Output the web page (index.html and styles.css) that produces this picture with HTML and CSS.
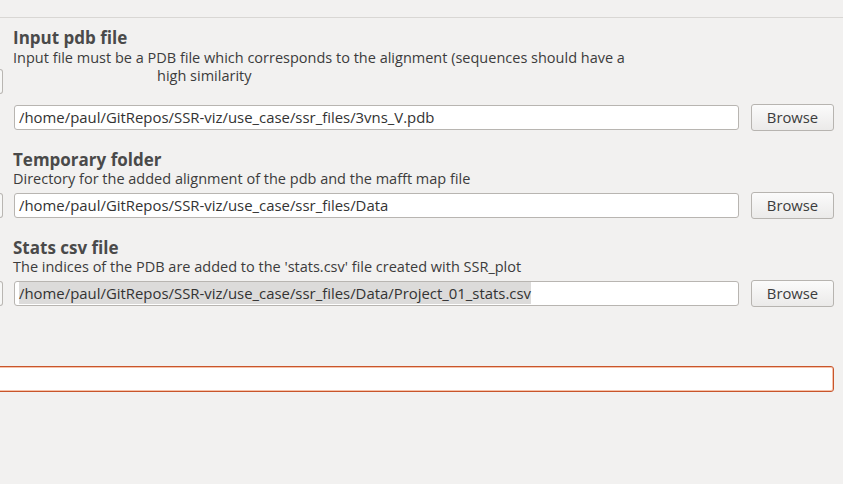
FILE: index.html
```html
<!DOCTYPE html>
<html>
<head>
<meta charset="utf-8">
<link rel="stylesheet" href="styles.css">
</head>
<body>
<div class="topbar"></div>
<div class="form">
  <div class="group g1">
    <div class="title">Input pdb file</div>
    <div class="desc">Input file must be a PDB file which corresponds to the alignment (sequences should have a<br><span class="cont">high similarity</span></div>
    <div class="row">
      <div class="stub up"></div>
      <div class="input">/home/paul/GitRepos/SSR-viz/use_case/ssr_files/3vns_V.pdb</div>
      <div class="btn">Browse</div>
    </div>
  </div>
  <div class="group g2">
    <div class="title">Temporary folder</div>
    <div class="desc">Directory for the added alignment of the pdb and the mafft map file</div>
    <div class="row">
      <div class="stub"></div>
      <div class="input">/home/paul/GitRepos/SSR-viz/use_case/ssr_files/Data</div>
      <div class="btn">Browse</div>
    </div>
  </div>
  <div class="group g3">
    <div class="title">Stats csv file</div>
    <div class="desc">The indices of the PDB are added to the 'stats.csv' file created with SSR_plot</div>
    <div class="row">
      <div class="stub"></div>
      <div class="input"><span class="sel">/home/paul/GitRepos/SSR-viz/use_case/ssr_files/Data/Project_01_stats.csv</span></div>
      <div class="btn">Browse</div>
    </div>
  </div>
  <div class="errorbox"></div>
</div>
</body>
</html>
```
FILE: styles.css
```css
html, body {
  margin: 0;
  padding: 0;
  background: #f2f1f0;
  width: 843px;
  height: 484px;
  overflow: hidden;
}
body {
  font-family: "Open Sans", "Noto Sans", sans-serif;
  color: #3c3c3c;
}
.topbar {
  height: 17px;
  border-bottom: 1px solid #d9d7d4;
}
.form {
  display: flex;
  flex-direction: column;
  padding-right: 9px;
}
.group {
  display: flex;
  flex-direction: column;
}
.title {
  font-weight: bold;
  font-size: 17px;
  line-height: 20px;
  padding-left: 13px;
  color: #4a4a4a;
}
.desc {
  font-size: 14.5px;
  line-height: 17px;
  padding-left: 13px;
}
.g1 .desc {
  padding-top: 1px;
  line-height: 18px;
}
.cont {
  padding-left: 144px;
}
.g1 { margin-top: 10px; }
.g1 .row { margin-top: 19px; }
.g2 { margin-top: 19px; }
.g2 .row { margin-top: 5px; }
.g3 { margin-top: 19px; }
.g3 .row { margin-top: 5px; }
.row {
  display: flex;
  align-items: center;
}
.stub {
  width: 2px;
  height: 23px;
  border: 1px solid #b9b6b2;
  border-left: none;
  border-radius: 0 3px 3px 0;
  margin-right: 11px;
  background: #f7f7f6;
}
.stub.up {
  align-self: flex-start;
  margin-top: -35px;
}
.input {
  flex: 1;
  height: 23px;
  border: 1px solid #b8b5b1;
  border-radius: 3px;
  background: #fff;
  font-size: 14.9px;
  line-height: 23px;
  padding-left: 4px;
  color: #333;
  white-space: nowrap;
  overflow: hidden;
}
.sel {
  background: #dcdbda;
  padding: 1px 0;
}
.btn {
  width: 81px;
  height: 25px;
  margin-left: 12px;
  border: 1px solid #b7b4b0;
  border-radius: 3px;
  background: linear-gradient(#fbfbfb, #ebeae9);
  font-size: 14.8px;
  line-height: 25px;
  text-align: center;
  color: #3c3c3c;
}
.errorbox {
  margin-top: 59px;
  margin-left: -4px;
  height: 24px;
  border: 1px solid #c8552b;
  border-radius: 3px;
  background: #fff;
  box-shadow: inset 0 0 0 1px #f6c2aa;
}
```
